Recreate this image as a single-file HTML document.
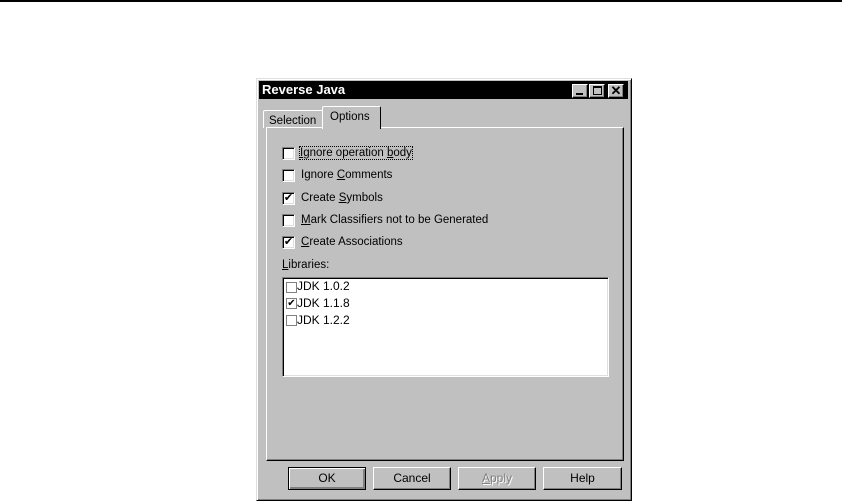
<!DOCTYPE html><html><head><style>
body{margin:0;width:842px;height:503px;background:#fff;position:relative;overflow:hidden;font-family:"Liberation Sans",sans-serif;font-size:11px;color:#000}
div{position:absolute;box-sizing:border-box}
.dlg{left:256px;top:78px;width:376px;height:423px;background:#c0c0c0;border:1px solid;border-color:#dfdfdf #000 #000 #dfdfdf;box-shadow:inset 1px 1px 0 #fff,inset -1px -1px 0 #808080}
.cb{width:13px;height:13px;background:#fff;border:1px solid;border-color:#808080 #fff #fff #808080;box-shadow:inset 1px 1px 0 #000,inset -1px -1px 0 #dfdfdf}
.lbl{white-space:nowrap;font-size:11.5px}
.btn{height:23px;top:467px;border:1px solid;border-color:#fff #000 #000 #fff;box-shadow:inset -1px -1px 0 #808080;text-align:center;line-height:21px;font-size:12px}
.tb{top:84px;width:16px;height:14px;background:#c0c0c0;border:1px solid;border-color:#fff #000 #000 #fff;box-shadow:inset -1px -1px 0 #808080}
.lc{width:11px;height:11px;border:1px solid #808080;background:#fff}
</style></head><body>
<div style="left:0;top:0;width:842px;height:2px;background:#000"></div>
<div class="dlg"></div>
<div style="left:259px;top:81px;width:369px;height:18px;background:#000;color:#fff;font-weight:bold;font-size:13px;line-height:18px;padding-left:3px">Reverse Java</div>
<div class="tb" style="left:572px"><div style="left:3px;top:8px;width:7px;height:2px;background:#000"></div></div>
<div class="tb" style="left:589px"><div style="left:3px;top:1px;width:9px;height:9px;border:1px solid #000;border-top-width:2px"></div></div>
<div class="tb" style="left:608px;font-size:13px;font-weight:bold;line-height:11px;text-align:center">✕</div>
<div style="left:266px;top:127px;width:358px;height:334px;border:1px solid;border-color:#fff #000 #000 #fff;box-shadow:inset -1px -1px 0 #808080"></div>
<div style="left:263px;top:110px;width:61px;height:18px;border:1px solid;border-color:#fff #000 transparent #fff;border-bottom:none;border-radius:2px 2px 0 0;padding:4px 0 0 5px;font-size:11.5px">Selection</div>
<div style="left:322px;top:106px;width:59px;height:23px;background:#c0c0c0;border:1px solid;border-color:#fff #000 transparent #fff;border-bottom:none;border-radius:2px 2px 0 0;padding:4px 0 0 7px;font-size:11.5px">Options</div>
<div class="cb" style="left:282px;top:147px"></div><div class="lbl" style="left:300px;top:147px;outline:1px dotted #000"><u>I</u>gnore operation <u>b</u>ody</div>
<div class="cb" style="left:282px;top:169px"></div><div class="lbl" style="left:301px;top:169px">Ignore <u>C</u>omments</div>
<div class="cb" style="left:282px;top:192px;font-size:11px;line-height:11px;text-align:center">✔</div><div class="lbl" style="left:301px;top:192px">Create <u>S</u>ymbols</div>
<div class="cb" style="left:282px;top:214px"></div><div class="lbl" style="left:301px;top:214px"><u>M</u>ark Classifiers not to be Generated</div>
<div class="cb" style="left:282px;top:236px;font-size:11px;line-height:11px;text-align:center">✔</div><div class="lbl" style="left:301px;top:236px"><u>C</u>reate Associations</div>
<div class="lbl" style="left:282px;top:259px"><u>L</u>ibraries:</div>
<div style="left:282px;top:277px;width:327px;height:100px;background:#fff;border:1px solid;border-color:#808080 #fff #fff #808080;box-shadow:inset 1px 1px 0 #000,inset -1px -1px 0 #dfdfdf"></div>
<div class="lc" style="left:286px;top:282px"></div><div class="lbl" style="left:297px;top:279px;font-size:12px">JDK 1.0.2</div>
<div class="lc" style="left:286px;top:298px;font-size:10px;line-height:9px;text-align:center">✔</div><div class="lbl" style="left:297px;top:296px;font-size:12px">JDK 1.1.8</div>
<div class="lc" style="left:286px;top:315px"></div><div class="lbl" style="left:297px;top:313px;font-size:12px">JDK 1.2.2</div>
<div class="btn" style="left:288px;width:78px;border-color:#000;box-shadow:inset 1px 1px 0 #fff,inset -2px -2px 0 #808080">OK</div>
<div class="btn" style="left:373px;width:78px">Cancel</div>
<div class="btn" style="left:458px;width:78px;color:#808080;text-shadow:1px 1px 0 #fff"><u>A</u>pply</div>
<div class="btn" style="left:543px;width:79px">Help</div>
</body></html>
